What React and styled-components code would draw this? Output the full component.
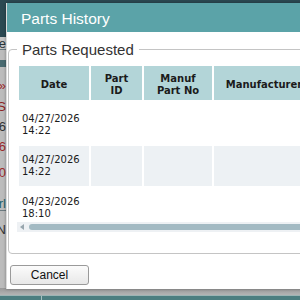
import React from "react";
import styled, { createGlobalStyle } from "styled-components";

const GlobalStyle = createGlobalStyle`
  html, body { margin: 0; padding: 0; width: 300px; height: 300px; overflow: hidden; }
  body { font-family: "Liberation Sans", Arial, sans-serif; }
`;

const Page = styled.div`
  position: relative;
  width: 300px;
  height: 300px;
  overflow: hidden;
  display: flex;
  flex-direction: column;
  background: #bcbcbc;
`;

const Header = styled.div`
  height: 37px;
  flex: none;
  background: #2b4952;
`;

const Main = styled.div`
  flex: 1;
  display: flex;
  flex-direction: column;
`;

const StripLine = styled.div`
  width: 6px;
  height: ${(p) => p.$h}px;
  flex: none;
  display: flex;
  justify-content: flex-end;
  align-items: center;
  overflow: hidden;
  white-space: nowrap;
  font-size: 13px;
  color: ${(p) => p.$color || "#2a3538"};
  background: ${(p) => p.$bg || "transparent"};
  border-bottom: ${(p) => (p.$line ? "1px solid #6c7b80" : "none")};
  box-sizing: border-box;
`;

const Shade = styled.div`
  height: 7px;
  flex: none;
  background: linear-gradient(#999999, #b4b4b4);
`;

const TealBar = styled.div`
  height: 4px;
  flex: none;
  background: #4c7e80;
  border-top: 1px solid #9cb4b4;
  display: flex;
`;

const TealTab = styled.div`
  width: 41px;
  border-right: 1px solid #a8c0c0;
`;

const Dialog = styled.div`
  position: absolute;
  top: 3px;
  left: 6px;
  width: 420px;
  height: 286px;
  background: #ffffff;
  border-left: 1px solid #dcdcdc;
  box-shadow: 0 0 3px rgba(0, 0, 0, 0.35);
  display: flex;
  flex-direction: column;
  box-sizing: border-box;
`;

const TitleBar = styled.div`
  height: 29px;
  box-sizing: border-box;
  padding: 3px 0 0 14px;
  line-height: 26px;
  font-size: 15.5px;
  color: #ffffff;
  background: #5ba3a8;
  flex: none;
`;

const Body = styled.div`
  padding: 9px 0 0 1px;
  display: flex;
  flex-direction: column;
  align-items: flex-start;
`;

const Fieldset = styled.fieldset`
  margin: 0;
  align-self: stretch;
  min-width: 0;
  border: 1px solid #c4c4c4;
  border-radius: 4px;
  padding: 6px 0 21px 8px;
`;

const Legend = styled.legend`
  padding: 0 5px;
  font-size: 15px;
  line-height: 17px;
  color: #333333;
`;

const Viewport = styled.div`
  height: 158px;
  overflow: hidden;
`;

const Table = styled.table`
  border-collapse: separate;
  border-spacing: 2px;
  table-layout: fixed;
  width: 443px;
  font-family: "DejaVu Sans", Verdana, sans-serif;
`;

const HeadRow = styled.tr`
  height: 34px;
`;

const Th = styled.th`
  width: ${(p) => p.$w - 4}px;
  background: #b3d5d8;
  font-size: 10px;
  font-weight: bold;
  line-height: 12px;
  color: #1b1b1b;
  padding: 3px 2px 0;
  text-align: center;
  vertical-align: middle;
  white-space: nowrap;
  overflow: hidden;
`;

const Row = styled.tr`
  height: ${(p) => p.$h}px;
  background: ${(p) => (p.$alt ? "#edf1f4" : "#ffffff")};
`;

const Td = styled.td`
  font-size: 10px;
  line-height: 12.5px;
  color: #1b1b1b;
  padding: ${(p) => (p.$shift ? "4px 3px 0" : "0 3px")};
  vertical-align: middle;
  white-space: nowrap;
`;

const Track = styled.div`
  height: 10px;
  background: #eef1f4;
  display: flex;
  align-items: center;
  padding-left: 3px;
`;

const Arrow = styled.span`
  width: 0;
  height: 0;
  border-top: 3px solid transparent;
  border-bottom: 3px solid transparent;
  border-right: 4px solid #98a6ae;
  margin-right: 5px;
`;

const Thumb = styled.div`
  flex: 1;
  height: 6px;
  border-radius: 3px;
  background: #a3bac3;
`;

const Button = styled.button`
  margin: 11px 0 0 2px;
  width: 79px;
  height: 20px;
  padding: 0;
  border: 1px solid #9a9a9a;
  border-radius: 3px;
  background: linear-gradient(#fbfbfb, #e8e8e8);
  font-family: "Liberation Sans", Arial, sans-serif;
  font-size: 12px;
  color: #111111;
`;

const strip = [
  { h: 13, text: "Se", bg: "#c6c6c6", line: true },
  { h: 10 },
  { h: 7, bg: "#4a6b71" },
  { h: 13 },
  { h: 10, text: "»", color: "#9c2a2a" },
  { h: 10 },
  { h: 13, text: "US", color: "#8e2323" },
  { h: 7 },
  { h: 12, text: "F6", color: "#333333" },
  { h: 8 },
  { h: 12, text: "6", color: "#9c2a2a" },
  { h: 8 },
  { h: 24, text: "0", color: "#9c2a2a" },
  { h: 13 },
  { h: 14, text: "rl", color: "#23636b", line: true },
  { h: 12 },
  { h: 12, text: "N", color: "#333333" },
];

const rows = [
  { date: "04/27/2026", time: "14:22", h: 42, shift: true },
  { date: "04/27/2026", time: "14:22", h: 40, alt: true },
  { date: "04/23/2026", time: "18:10", h: 40 },
];

export default function App() {
  return (
    <>
      <GlobalStyle />
      <Page>
        <Header />
        <Main>
          {strip.map((s, i) => (
            <StripLine key={i} $h={s.h} $bg={s.bg} $color={s.color} $line={s.line}>
              {s.text}
            </StripLine>
          ))}
        </Main>
        <Shade />
        <TealBar>
          <TealTab />
        </TealBar>
        <Dialog>
          <TitleBar>Parts History</TitleBar>
          <Body>
            <Fieldset>
              <Legend>Parts Requested</Legend>
              <Viewport>
                <Table>
                  <thead>
                    <HeadRow>
                      <Th $w={70}>Date</Th>
                      <Th $w={51}>
                        Part
                        <br />
                        ID
                      </Th>
                      <Th $w={68}>
                        Manuf
                        <br />
                        Part No
                      </Th>
                      <Th $w={100}>Manufacturer</Th>
                      <Th $w={70}>Qty</Th>
                      <Th $w={70}>Status</Th>
                    </HeadRow>
                  </thead>
                  <tbody>
                    {rows.map((r, i) => (
                      <Row key={i} $h={r.h} $alt={r.alt}>
                        <Td $shift={r.shift}>
                          {r.date}
                          <br />
                          {r.time}
                        </Td>
                        <Td />
                        <Td />
                        <Td />
                        <Td />
                        <Td />
                      </Row>
                    ))}
                  </tbody>
                </Table>
              </Viewport>
              <Track>
                <Arrow />
                <Thumb />
              </Track>
            </Fieldset>
            <Button>Cancel</Button>
          </Body>
        </Dialog>
      </Page>
    </>
  );
}
